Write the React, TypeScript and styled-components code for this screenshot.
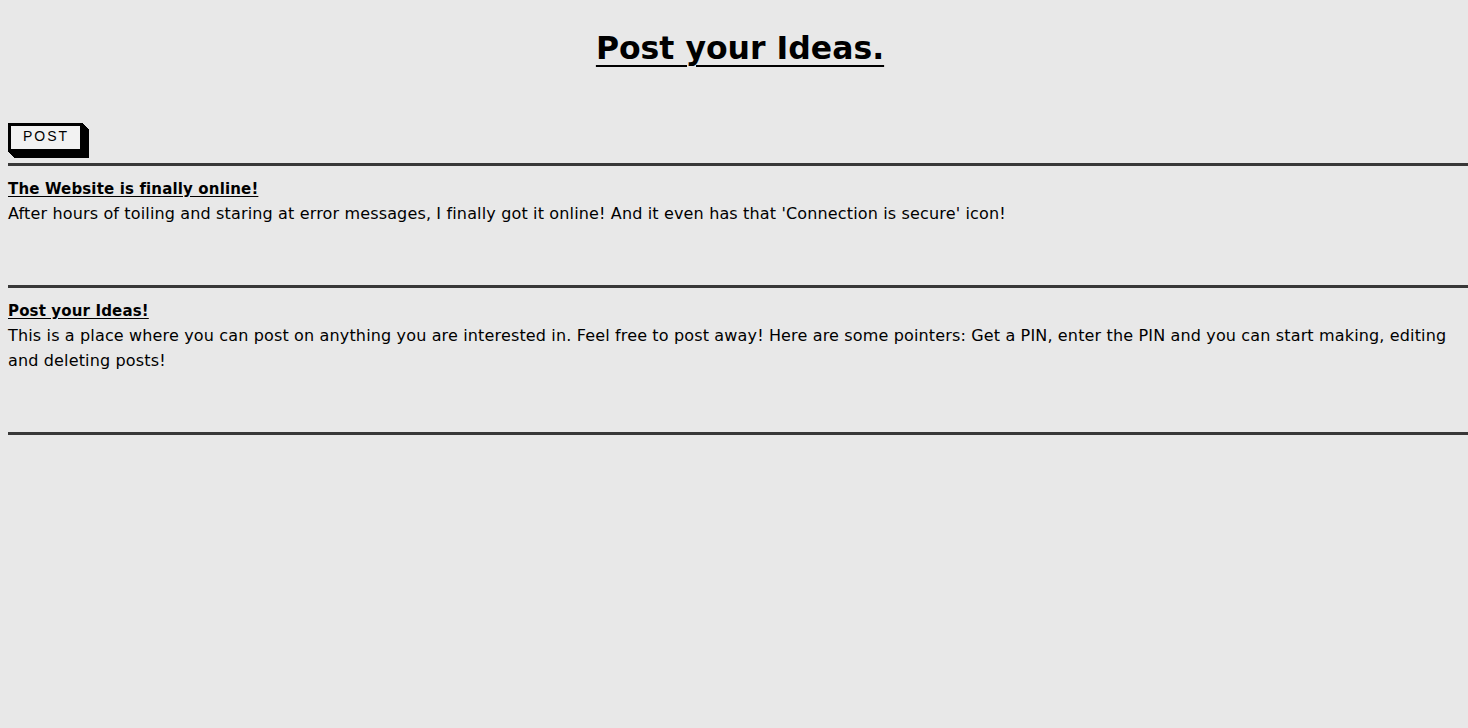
import React from "react";
import styled, { createGlobalStyle } from "styled-components";

const Global = createGlobalStyle`
  html, body { margin: 0; padding: 0; background: #e8e8e8; }
  body {
    padding: 0 0 0 8px;
    font-family: "Comic Sans MS", "DejaVu Sans", sans-serif;
    color: #000;
    overflow-x: hidden;
  }
`;

const Page = styled.div`
  display: flex;
  flex-direction: column;
`;

const Title = styled.h1`
  margin: 0;
  padding: 27px 0 0 4px;
  height: 97px;
  box-sizing: border-box;
  text-align: center;
  font-size: 31.5px;
  line-height: 42px;
  font-weight: bold;
  text-decoration: underline;
  text-decoration-thickness: 2px;
  text-underline-offset: 6px;
`;

const Toolbar = styled.div`
  display: flex;
  height: 66px;
  padding-top: 26px;
  box-sizing: border-box;
`;

const PostButton = styled.button`
  width: 75px;
  height: 29px;
  border: 3px solid #000;
  border-radius: 0;
  background: #f2f2f2;
  box-shadow: 1px 1px 0 #000, 2px 2px 0 #000, 3px 3px 0 #000, 4px 4px 0 #000,
    5px 5px 0 #000, 6px 6px 0 #000;
  font-family: "Liberation Sans", Arial, sans-serif;
  font-size: 14px;
  letter-spacing: 2px;
  padding: 0 0 3px 1px;
  color: #000;
  cursor: pointer;
`;

const Rule = styled.div`
  height: 3px;
  background: #383838;
  margin-right: -8px;
`;

const Post = styled.article`
  padding: 11px 8px 59px 0;
`;

const PostTitle = styled.h2`
  margin: 0;
  font-size: 15px;
  letter-spacing: 0.15px;
  line-height: 24px;
  font-weight: bold;
  text-decoration: underline;
  text-underline-offset: 2px;
`;

const PostBody = styled.p`
  margin: 0;
  font-size: 16px;
  letter-spacing: 0.15px;
  line-height: 25px;
`;

const posts = [
  {
    title: "The Website is finally online!",
    body: "After hours of toiling and staring at error messages, I finally got it online! And it even has that 'Connection is secure' icon!",
  },
  {
    title: "Post your Ideas!",
    body: "This is a place where you can post on anything you are interested in. Feel free to post away! Here are some pointers: Get a PIN, enter the PIN and you can start making, editing and deleting posts!",
  },
];

export default function App() {
  return (
    <Page>
      <Global />
      <Title>Post your Ideas.</Title>
      <Toolbar>
        <PostButton>POST</PostButton>
      </Toolbar>
      <Rule />
      {posts.map((p) => (
        <React.Fragment key={p.title}>
          <Post>
            <PostTitle>{p.title}</PostTitle>
            <PostBody>{p.body}</PostBody>
          </Post>
          <Rule />
        </React.Fragment>
      ))}
    </Page>
  );
}
